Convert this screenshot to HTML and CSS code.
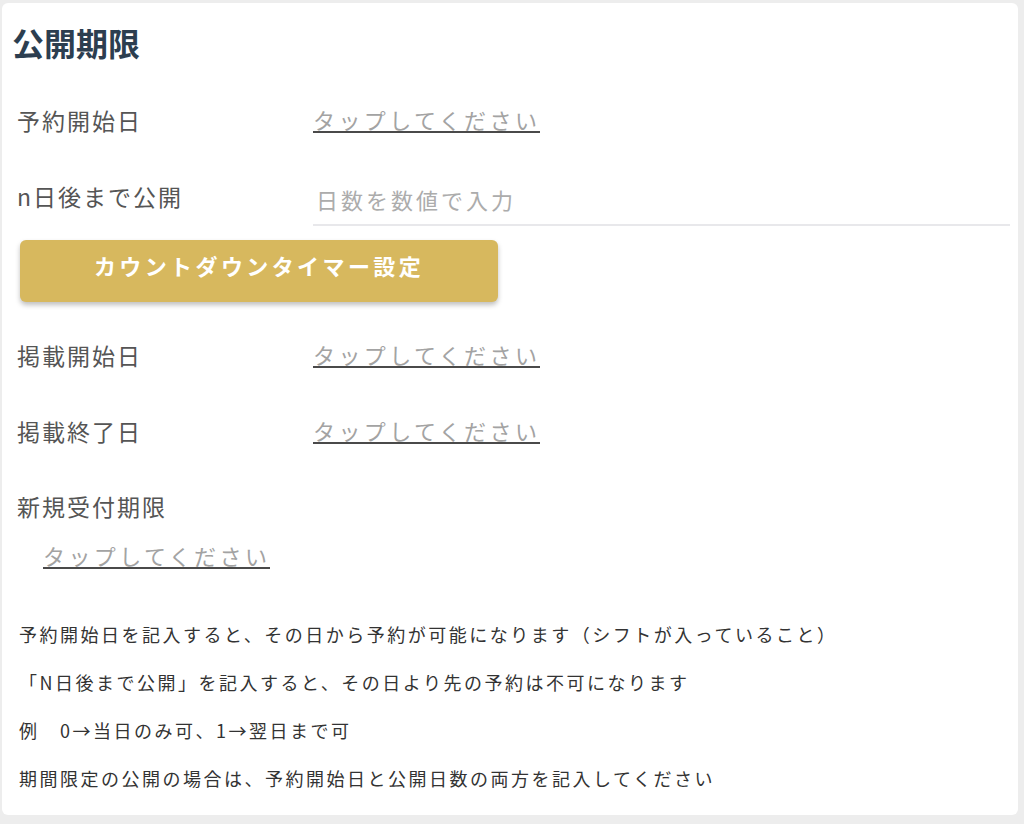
FILE: index.html
```html
<!DOCTYPE html>
<html lang="ja">
<head>
    <meta charset="UTF-8">
    <title>公開期限</title>
    <link rel="stylesheet" href="styles.css">
</head>
<body>
    <div class="card">
        <h2>公開期限</h2>

        <div class="form-row">
            <span class="row-label">予約開始日</span>
            <span class="tap-value">タップしてください</span>
        </div>

        <div class="form-row">
            <span class="row-label">n日後まで公開</span>
            <input type="text" class="days-input" placeholder="日数を数値で入力">
        </div>

        <button type="button" class="timer-button">カウントダウンタイマー設定</button>

        <div class="form-row row-after-button">
            <span class="row-label">掲載開始日</span>
            <span class="tap-value">タップしてください</span>
        </div>

        <div class="form-row">
            <span class="row-label">掲載終了日</span>
            <span class="tap-value">タップしてください</span>
        </div>

        <div class="stack-label">新規受付期限</div>
        <div class="stack-value">
            <span class="tap-value">タップしてください</span>
        </div>

        <!-- 説明 -->
        <div class="notes">
            <p>予約開始日を記入すると、その日から予約が可能になります（シフトが入っていること）</p>
            <p>「N日後まで公開」を記入すると、その日より先の予約は不可になります</p>
            <p>例　0→当日のみ可、1→翌日まで可</p>
            <p>期間限定の公開の場合は、予約開始日と公開日数の両方を記入してください</p>
        </div>
    </div>
</body>
</html>
```

FILE: styles.css
```css
html, body {
    height: 100%;
}

body {
    margin: 0;
    padding: 3px 6px 9px 2px;
    box-sizing: border-box;
    background-color: #ededed;
    font-family: "Noto Sans CJK JP", "Noto Sans", sans-serif;
}

.card {
    height: 100%;
    box-sizing: border-box;
    background-color: #ffffff;
    border-radius: 6px;
    padding: 20px 8px 0 10px;
}

h2 {
    margin: 0 0 20px 0;
    font-size: 32px;
    line-height: 39px;
    font-weight: bold;
    color: #2c3e50;
}

.form-row {
    display: flex;
    align-items: center;
    height: 76px;
}

.row-label {
    width: 296px;
    flex-shrink: 0;
    padding-left: 5px;
    font-size: 23px;
    letter-spacing: 2px;
    color: #555555;
}

.tap-value {
    display: inline-block;
    font-size: 22px;
    line-height: 23px;
    letter-spacing: 3.4px;
    color: #a3a3a3;
    border-bottom: 2px solid #4a4a4a;
}

.days-input {
    flex: 1;
    align-self: flex-end;
    margin-bottom: 8px;
    height: 50px;
    padding: 0 3px;
    border: none;
    border-bottom: 2px solid #e8e8eb;
    font-family: inherit;
    font-size: 22px;
    letter-spacing: 3px;
    color: #555555;
    outline: none;
}

.days-input::placeholder {
    color: #acacac;
}

.timer-button {
    display: block;
    width: 478px;
    height: 62px;
    margin: 6px 0 0 8px;
    padding: 0 0 12px 0;
    border: none;
    border-radius: 6px;
    background-color: #d7b85e;
    box-shadow: 0 3px 5px rgba(0, 0, 0, 0.25);
    color: #ffffff;
    font-family: inherit;
    font-size: 22px;
    font-weight: bold;
    letter-spacing: 3.4px;
    cursor: pointer;
}

.row-after-button {
    margin-top: 15px;
}

.stack-label {
    margin-top: 19px;
    padding-left: 5px;
    font-size: 23px;
    line-height: 36px;
    letter-spacing: 2px;
    color: #555555;
}

.stack-value {
    margin-top: 20px;
    padding-left: 31px;
}

.notes {
    margin-top: 40px;
    padding-left: 7px;
}

.notes p {
    margin: 0;
    font-size: 18px;
    line-height: 48px;
    letter-spacing: 2.5px;
    color: #333333;
}
```
